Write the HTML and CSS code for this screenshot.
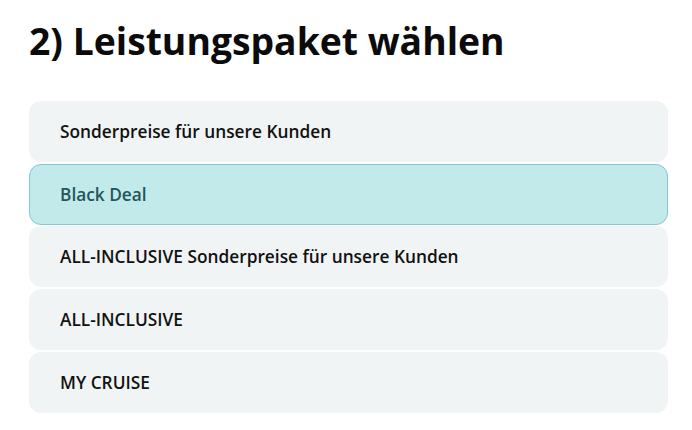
FILE: index.html
```html
<!DOCTYPE html>
<html lang="de">
<head>
<meta charset="utf-8">
<link rel="stylesheet" href="styles.css">
</head>
<body>
<main class="section">
  <h2 class="title">2) Leistungspaket wählen</h2>
  <ul class="options">
    <li class="option">Sonderpreise für unsere Kunden</li>
    <li class="option selected">Black Deal</li>
    <li class="option">ALL-INCLUSIVE Sonderpreise für unsere Kunden</li>
    <li class="option">ALL-INCLUSIVE</li>
    <li class="option">MY CRUISE</li>
  </ul>
</main>
</body>
</html>
```
FILE: styles.css
```css
html, body {
  margin: 0;
  padding: 0;
  background: #ffffff;
}
body {
  font-family: "Open Sans", "DejaVu Sans", sans-serif;
  color: #111;
}
.section {
  padding: 15px 24px 0 29px;
  width: 639px;
}
.title {
  margin: 0 0 35px 0;
  font-size: 37.3px;
  font-weight: 700;
  line-height: 51px;
  color: #0b0b0b;
}
.options {
  list-style: none;
  margin: 0;
  padding: 0;
  display: flex;
  flex-direction: column;
  gap: 1.7px;
}
.option {
  box-sizing: border-box;
  height: 61px;
  display: flex;
  align-items: center;
  padding: 0 30px;
  background: #f1f4f5;
  border: 1px solid transparent;
  border-radius: 12px;
  font-size: 17.3px;
  font-weight: 600;
  color: #111;
}
.option.selected {
  background: #c2eaea;
  border-color: #86c5d3;
  color: #24555a;
}
```
